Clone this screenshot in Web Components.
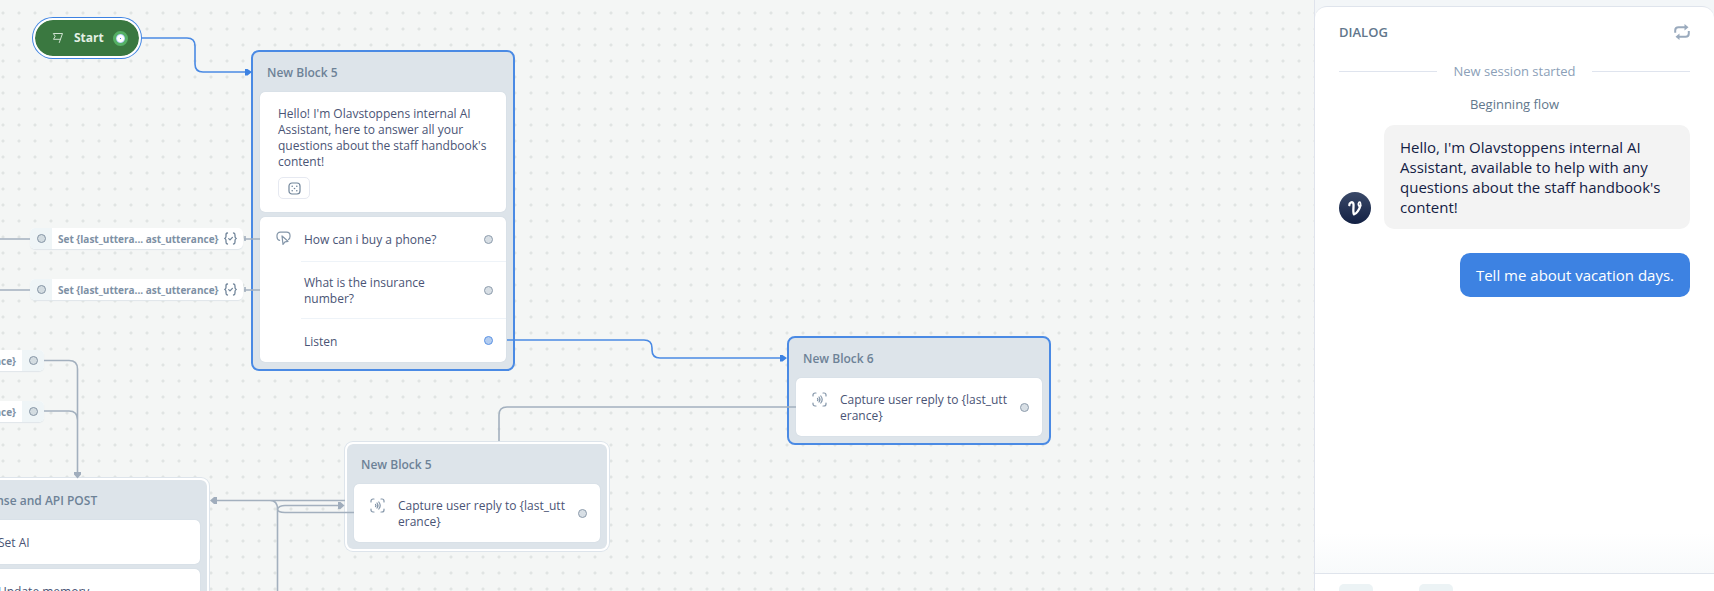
<!DOCTYPE html>
<html lang="en">
<head>
<meta charset="utf-8">
<title>Flow designer</title>
<style>
  body {
    margin: 0;
    font-family: "Open Sans", "Noto Sans", sans-serif;
  }
</style>
</head>
<body>
<flow-app>
  <flow-canvas slot="canvas">
    <flow-start style="left: 33px; top: 18px">Start</flow-start>

    <flow-block label="New Block 5" selected style="left: 251px; top: 50px">
      <flow-card>
        <flow-message>Hello! I'm Olavstoppens internal AI Assistant, here to answer all your questions about the staff handbook's content!</flow-message>
      </flow-card>
      <flow-card>
        <flow-row icon="choice" port>How can i buy a phone?</flow-row>
        <flow-row divided port>What is the insurance number?</flow-row>
        <flow-row divided port="active">Listen</flow-row>
      </flow-card>
    </flow-block>

    <flow-block label="New Block 6" selected style="left: 787px; top: 336px">
      <flow-card>
        <flow-row icon="capture" port breakall>Capture user reply to {last_utterance}</flow-row>
      </flow-card>
    </flow-block>

    <flow-block label="New Block 5" style="left: 345px; top: 442px">
      <flow-card>
        <flow-row icon="capture" port breakall>Capture user reply to {last_utterance}</flow-row>
      </flow-card>
    </flow-block>

    <flow-block label="Response and API POST" style="left: -55px; top: 478px">
      <flow-card><flow-row>Set AI</flow-row></flow-card>
      <flow-card><flow-row>Update memory</flow-row></flow-card>
    </flow-block>

    <flow-chip style="left: 30px; top: 228px">Set {last_uttera... ast_utterance}</flow-chip>
    <flow-chip style="left: 30px; top: 279px">Set {last_uttera... ast_utterance}</flow-chip>
    <flow-chip reverse style="left: -169px; top: 350px">Set {last_uttera... ast_utterance}</flow-chip>
    <flow-chip reverse style="left: -169px; top: 401px">Set {last_uttera... ast_utterance}</flow-chip>
  </flow-canvas>

  <dialog-panel slot="panel" label="Dialog">
    <dialog-divider>New session started</dialog-divider>
    <dialog-note>Beginning flow</dialog-note>
    <dialog-bubble>Hello, I'm Olavstoppens internal AI Assistant, available to help with any questions about the staff handbook's content!</dialog-bubble>
    <dialog-bubble from="user">Tell me about vacation days.</dialog-bubble>
  </dialog-panel>
</flow-app>

<script>
const ICONS = {
  choice: `<svg width="15" height="15" viewBox="0 0 15 15" fill="none" stroke="#8496a9" stroke-width="1.2" stroke-linecap="round" stroke-linejoin="round">
    <path d="M3.6 9.4C1.9 9 1 7.6 1 5.8V4.6C1 2.500 2.300 1.200 4.400 1.200h6.200C12.700 1.200 14 2.500 14 4.600v.8c0 1.400-.5 2.400-1.500 3"/>
    <path d="M6 5l1 8.400 2-2.500 3-.6z"/>
  </svg>`,
  capture: `<svg width="15" height="15" viewBox="0 0 15 15" fill="none" stroke="#8496a9" stroke-width="1.200" stroke-linecap="round">
    <path d="M1 4V3a2 2 0 0 1 2-2h1M11 1h1a2 2 0 0 1 2 2v1M14 11v1a2 2 0 0 1-2 2h-1M4 14H3a2 2 0 0 1-2-2v-1"/>
    <path d="M5.500 6.500q1 1 0 2M7 5q2 2.500 0 5M8.800 4q2.800 3.500 0 7"/>
  </svg>`,
  code: `<svg width="13" height="13" viewBox="0 0 13 13" fill="none" stroke="#71859a" stroke-width="1.300" stroke-linecap="round" stroke-linejoin="round">
    <path d="M3.500 1C2 1 2 2 2 3v1.500Q2 6 .7 6.500 2 7 2 8.500V10c0 1 0 2 1.500 2M9.500 1C11 1 11 2 11 3v1.500q0 1.500 1.300 2Q11 7 11 8.500V10c0 1 0 2-1.500 2"/>
    <path d="M4.700 6.600l1.300 1.300 2.400-2.500"/>
  </svg>`,
  dice: `<svg width="13" height="13" viewBox="0 0 13 13" fill="none" stroke="#71859a">
    <rect x="1" y="1" width="11" height="11" rx="3" stroke-width="1.200"/>
    <g fill="#71859a" stroke="none"><circle cx="4.200" cy="4.200" r=".8"/><circle cx="8.800" cy="4.200" r=".8"/><circle cx="6.500" cy="6.500" r=".8"/><circle cx="4.200" cy="8.800" r=".8"/><circle cx="8.800" cy="8.800" r=".8"/></g>
  </svg>`,
  flag: `<svg width="12" height="12" viewBox="0 0 12 12" fill="none" stroke="#cfe3d1" stroke-linejoin="round" stroke-linecap="round">
    <path d="M7.300 10.500L10.500 1.500H1.300L3.200 4.200 1.500 7.300H8.300"/>
  </svg>`,
  reset: `<svg width="16" height="16" viewBox="0 0 16 16" fill="none" stroke="#9aaabd" stroke-width="2">
    <path d="M1.200 8.800V6.500Q1.200 3.200 4.500 3.200H11M14.800 7v2.500q0 3.300-3.300 3.300H5"/>
    <path d="M10.500 0l4 3.200-4 3.200zM5.500 9.600l-4 3.200 4 3.200z" fill="#9aaabd" stroke="none"/>
  </svg>`,
  voice: `<svg width="32" height="32" viewBox="0 0 32 32" fill="none" stroke="#fff" stroke-linecap="round" stroke-linejoin="round">
    <path d="M10.300 13.200C10.200 10.600 13.200 9.200 14.300 11.200C15.300 13.400 13.300 19.500 15 22.400C17.500 22 20.600 17 21.400 13.500" stroke-width="2.300"/>
    <path d="M21.400 14C22.200 11.500 21 9 19.800 10.600C18.800 12 19.500 13.500 20.300 14.500" stroke-width="1.600"/>
  </svg>`
};

// Base class: puts the element's template into an open shadow root
class FlowElement extends HTMLElement {
  constructor() {
    super();
    this.attachShadow({ mode: 'open' });
  }

  connectedCallback() {
    this.shadowRoot.innerHTML = this.render();
  }
}

class FlowApp extends FlowElement {
  render() {
    return `
      <style>
        :host {
          display: flex;
          height: 100vh;
          overflow: hidden;
        }
        main { flex: 1; min-width: 0; display: flex; }
        aside { flex: 0 0 400px; display: flex; }
      </style>
      <main><slot name="canvas"></slot></main>
      <aside><slot name="panel"></slot></aside>
    `;
  }
}

class FlowCanvas extends FlowElement {
  render() {
    return `
      <style>
        :host {
          display: block;
          flex: 1;
          position: relative;
          overflow: hidden;
          background: radial-gradient(circle at 8px 8px, #e0e4e3 1px, transparent 2px) -5px 5px / 16px 16px, #f4f6f5;
        }
        ::slotted(*) { position: absolute; }
        svg {
          position: absolute;
          inset: 0;
          width: 100%;
          height: 100%;
          z-index: 1;
          pointer-events: none;
        }
        .link { stroke: #a3b0be; stroke-width: 1.6; fill: none; }
        .tip { fill: #a0adbc; }
        .active .link { stroke: #4a8ae4; }
        .active .tip { fill: #3d82e2; }
      </style>
      <slot></slot>
      <svg aria-hidden="true">
        <g>
          <path class="link" d="M0 239H30M0 290H30M244 239H260M244 290H260M245 236v5M245 287v5"/>
          <path class="link" d="M44 360.500H69Q77.500 360.500 77.500 369V473M44 411H69Q77.500 411 77.500 420"/>
          <path class="link" d="M796 407H507Q499 407 499 415V441"/>
          <path class="link" d="M215 500.500H345M270 500.500Q277.500 500.500 277.500 509V591"/>
          <path class="link" d="M354 512.500H285Q277.500 512.500 277.500 509Q279 505.500 285 505.500H340"/>
          <path class="tip" d="M74 472h7v2.500l-3.500 4-3.500-4zM210 500.500l4-3.500h3v7h-3zM338 502v7h2.500l4-3.500-4-3.500z"/>
        </g>
        <g class="active">
          <path class="link" d="M142 38H187Q195 38 195 46V64Q195 72 203 72H246"/>
          <path class="link" d="M507 340H644Q652 340 652 348V350Q652 358 660 358H781"/>
          <path class="tip" d="M245 69v6.500h2.500l4.500-3.500-4.500-3zM780 355v6.500h2.500l4.500-3.500-4.500-3z"/>
        </g>
      </svg>
    `;
  }
}

class FlowStart extends FlowElement {
  render() {
    return `
      <style>
        :host {
          display: flex;
          align-items: center;
          box-sizing: border-box;
          width: 108px;
          height: 40px;
          padding: 0 11px 0 17px;
          border: 2px solid #fff;
          border-radius: 20px;
          box-shadow: 0 0 0 1px #3d82e2;
          background: #3a7840;
          background-clip: padding-box;
          color: #e3efe4;
          font-size: 12px;
          line-height: 16px;
          font-weight: 700;
        }
        span { flex: 1; margin-left: 10px; }
        i {
          box-sizing: border-box;
          width: 15px;
          height: 15px;
          border: 3px solid #55b065;
          border-radius: 50%;
          background: radial-gradient(circle, #3d82e2 0, #fff 1px, #fff 3px, #86b1ee 5px);
        }
      </style>
      ${ICONS.flag}
      <span><slot></slot></span>
      <i></i>
    `;
  }
}

class FlowBlock extends FlowElement {
  render() {
    return `
      <style>
        :host {
          display: block;
          box-sizing: border-box;
          width: 264px;
          padding: 0 7px 7px;
          border: 2px solid #fff;
          border-radius: 8px;
          box-shadow: 0 0 0 1px #dde4eb;
          background: #dde4ea;
          background-clip: padding-box;
        }
        :host([selected]) {
          border-color: #4a8ae4;
          box-shadow: none;
        }
        header {
          padding: 13px 7px 11px;
          color: #6d8297;
          font-size: 12px;
          line-height: 16px;
          font-weight: 600;
        }
        .cards { display: grid; gap: 5px; }
      </style>
      <header>${this.getAttribute('label')}</header>
      <div class="cards"><slot></slot></div>
    `;
  }
}

class FlowCard extends FlowElement {
  render() {
    return `
      <style>
        :host {
          display: block;
          border-radius: 5px;
          background: #fff;
          box-shadow: 0 0 1px #b9c5d1;
          color: #4a5475;
          font-size: 12px;
          line-height: 16px;
        }
      </style>
      <slot></slot>
    `;
  }
}

class FlowMessage extends FlowElement {
  render() {
    return `
      <style>
        :host { display: block; padding: 14px 16px 13px 18px; }
        button {
          display: flex;
          align-items: center;
          justify-content: center;
          width: 32px;
          height: 22px;
          margin-top: 7px;
          padding: 0;
          border: 1px solid #e6e9f1;
          border-radius: 5px;
          background: #fff;
        }
      </style>
      <slot></slot>
      <button type="button" aria-label="Variants">${ICONS.dice}</button>
    `;
  }
}

class FlowRow extends FlowElement {
  render() {
    const icon = ICONS[this.getAttribute('icon')] || '';
    const port = this.hasAttribute('port') ? '<i></i>' : '';
    return `
      <style>
        :host { display: flex; }
        .icon {
          flex: 0 0 41px;
          box-sizing: border-box;
          padding: 14px 0 0 16px;
        }
        .body {
          flex: 1;
          display: flex;
          align-items: center;
          box-sizing: border-box;
          min-height: 44px;
          padding: 11px 13px 11px 3px;
          gap: 10px;
        }
        :host([divided]) .body { border-top: 1px solid #eef3f8; }
        :host([breakall]) span { word-break: break-all; }
        :host([breakall]) .body { min-height: 58px; }
        span { flex: 1; padding-top: 2px; }
        i {
          box-sizing: border-box;
          width: 9px;
          height: 9px;
          border: 1px solid #8d9cac;
          border-radius: 50%;
          background: #d8dfe5;
        }
        :host([port="active"]) i { border-color: #5c93e4; background: #b4cdf0; }
      </style>
      <div class="icon">${icon}</div>
      <div class="body"><span><slot></slot></span>${port}</div>
    `;
  }
}

class FlowChip extends FlowElement {
  render() {
    return `
      <style>
        :host {
          display: flex;
          width: 213px;
          height: 21px;
          border-radius: 5px;
          box-shadow: 0 1px 1px #e0e6ea;
          background: #fff;
          color: #7d90a4;
          font-size: 10px;
          line-height: 14px;
          font-weight: 700;
          white-space: nowrap;
        }
        :host([reverse]) { flex-direction: row-reverse; }
        .port {
          flex: 0 0 22px;
          display: flex;
          align-items: center;
          justify-content: center;
          background: #eff5f7;
          border-radius: 5px 0 0 5px;
        }
        :host([reverse]) .port { border-radius: 0 5px 5px 0; }
        .port i {
          box-sizing: border-box;
          width: 9px;
          height: 9px;
          border: 1px solid #8595a5;
          border-radius: 50%;
          background: #d3dce1;
        }
        .body {
          flex: 1;
          display: flex;
          align-items: center;
          justify-content: space-between;
          padding: 0 6px;
        }
        :host([reverse]) .body { flex-direction: row-reverse; }
      </style>
      <div class="port"><i></i></div>
      <div class="body"><span><slot></slot></span>${ICONS.code}</div>
    `;
  }
}

class DialogPanel extends FlowElement {
  render() {
    return `
      <style>
        :host {
          flex: 1;
          display: flex;
          flex-direction: column;
          border-left: 1px solid #dfe3ec;
          background: #f3f6f8;
        }
        section {
          flex: 1;
          min-height: 0;
          box-sizing: border-box;
          margin-top: 6px;
          padding: 15px 24px 0;
          border-top: 1px solid #dfe4ec;
          border-radius: 12px 12px 0 0;
          background: linear-gradient(#fff, #fff calc(100% - 40px), #f8fafb);
        }
        header {
          display: flex;
          align-items: center;
          justify-content: space-between;
        }
        h2 {
          margin: 0;
          color: #62778c;
          font-size: 13px;
          line-height: 20px;
          font-weight: 600;
          text-transform: uppercase;
        }
        header button {
          display: flex;
          padding: 0;
          border: 0;
          background: none;
        }
        footer {
          display: flex;
          gap: 46px;
          box-sizing: border-box;
          height: 18px;
          overflow: hidden;
          padding: 10px 24px 0;
          border-top: 1px solid #dfe4ec;
          background: #fff;
        }
        footer button {
          width: 34px;
          height: 34px;
          border: 0;
          border-radius: 5px;
          background: #ecf3f5;
        }
      </style>
      <section>
        <header>
          <h2>${this.getAttribute('label')}</h2>
          <button type="button" aria-label="Restart">${ICONS.reset}</button>
        </header>
        <slot></slot>
      </section>
      <footer>
        <button type="button" aria-label="Back"></button>
        <button type="button" aria-label="Forward"></button>
      </footer>
    `;
  }
}

class DialogDivider extends FlowElement {
  render() {
    return `
      <style>
        :host {
          display: flex;
          align-items: center;
          gap: 16px;
          margin-top: 19px;
          color: #8c9fb8;
          font-size: 13px;
          line-height: 20px;
        }
        :host::before,
        :host::after {
          content: "";
          flex: 1;
          height: 1px;
          background: #dfe4ee;
        }
      </style>
      <slot></slot>
    `;
  }
}

class DialogNote extends FlowElement {
  render() {
    return `
      <style>
        :host {
          display: block;
          margin: 13px 0 11px;
          color: #62778c;
          font-size: 13px;
          line-height: 20px;
          text-align: center;
        }
      </style>
      <slot></slot>
    `;
  }
}

class DialogBubble extends FlowElement {
  render() {
    const avatar = this.getAttribute('from') === 'user' ? '' : `<div class="avatar">${ICONS.voice}</div>`;
    return `
      <style>
        :host {
          display: flex;
          align-items: flex-end;
          gap: 13px;
          margin-bottom: 24px;
          font-size: 15px;
          line-height: 20px;
        }
        :host([from="user"]) { justify-content: flex-end; }
        .avatar {
          flex: 0 0 32px;
          height: 32px;
          margin-bottom: 5px;
          border-radius: 50%;
          background: linear-gradient(#3a4968, #132144);
        }
        .text {
          padding: 12px 16px;
          border-radius: 10px;
          background: #f3f3f3;
          color: #132144;
        }
        :host([from="user"]) .text { background: #3d82e2; color: #fff; }
      </style>
      ${avatar}
      <div class="text"><slot></slot></div>
    `;
  }
}

customElements.define('flow-app', FlowApp);
customElements.define('flow-canvas', FlowCanvas);
customElements.define('flow-start', FlowStart);
customElements.define('flow-block', FlowBlock);
customElements.define('flow-card', FlowCard);
customElements.define('flow-message', FlowMessage);
customElements.define('flow-row', FlowRow);
customElements.define('flow-chip', FlowChip);
customElements.define('dialog-panel', DialogPanel);
customElements.define('dialog-divider', DialogDivider);
customElements.define('dialog-note', DialogNote);
customElements.define('dialog-bubble', DialogBubble);
</script>
</body>
</html>
